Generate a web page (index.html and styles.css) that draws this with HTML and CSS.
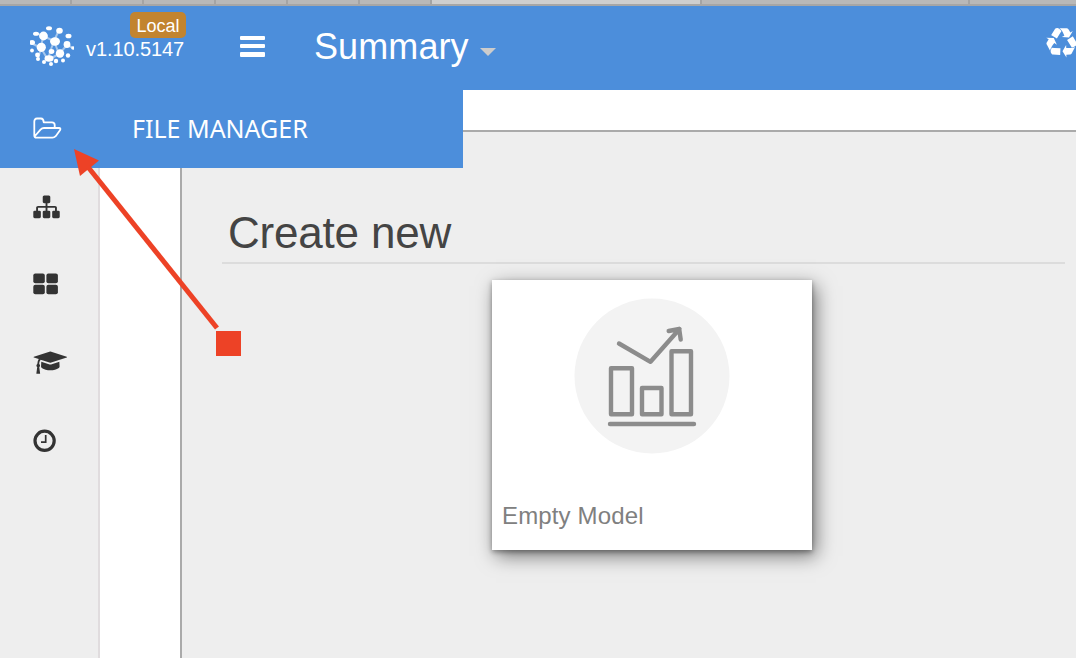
FILE: index.html
```html
<!DOCTYPE html>
<html lang="en">
<head>
<meta charset="utf-8">
<title>Summary</title>
<link rel="stylesheet" href="styles.css">
</head>
<body>
<div class="app">
  <div class="tabs"><i class="tab"></i><i class="tab"></i><i class="tab"></i><i class="tab"></i><i class="tab"></i><i class="tab"></i><i class="tab tab-active"></i><i class="tab tab-wide"></i><i class="tab tab-rest"></i></div>
  <header class="header">
    <svg class="logo" viewBox="0 0 44 42" fill="#fff">
      <g stroke="#fff" stroke-width="2" opacity=".5" fill="none"><path d="M13 11L11 23L1 18M24 16L13 11L6 8M24 16L29 5M24 16L20 27L18 35M11 23L18 35M29 29L24 16M29 29L37 20L43 23M29 29L18 35M11 23L8 34"/></g>
      <ellipse cx="19" cy="3.200" rx="3" ry="2"/><ellipse cx="29.500" cy="5.800" rx="3.300" ry="3"/><ellipse cx="6" cy="8.800" rx="3" ry="2"/><circle cx="13.500" cy="11" r="4.400"/><ellipse cx="38.500" cy="11" rx="3" ry="2.300"/><ellipse cx="25" cy="16.500" rx="5" ry="4.200"/><ellipse cx="2" cy="17.500" rx="3" ry="2.500"/><circle cx="11.300" cy="22.300" r="4.600"/><circle cx="37" cy="19.500" r="3.400"/><circle cx="43" cy="23" r="1.800"/><circle cx="2" cy="25.500" r="1.900"/><ellipse cx="21.500" cy="26.500" rx="2.800" ry="2.400"/><circle cx="30" cy="28.500" r="4.200"/><circle cx="7.500" cy="30" r="2.400"/><circle cx="38" cy="30.500" r="2.200"/><circle cx="8" cy="34" r="2"/><ellipse cx="19" cy="33.500" rx="4.500" ry="3.200"/><circle cx="26" cy="36" r="2.200"/><circle cx="33" cy="35.500" r="2"/><circle cx="14" cy="37" r="2"/><circle cx="21" cy="39" r="2"/>
    </svg>
    <div class="build"><span class="badge">Local</span><span class="version">v1.10.5147</span></div>
    <div class="burger"><i></i><i></i><i></i></div>
    <h1 class="title">Summary</h1>
    <i class="caret"></i>
    <svg class="recycle" viewBox="0 0 1792 1792" fill="#fff"><path d="M836 1169l-15 368-2 22-420-29q-36-3-67-31.500t-47-65.500q-11-27-14.500-55t4-65 12-55 21.500-64 19-53q78 12 509 28zm-387-586l180 379-147-92q-63 72-111.500 144.500t-72.500 125-39.500 94.500-18.500 63l-4 21-190-357q-17-26-18-56t6-47l8-18q35-63 114-188l-140-86zm1231 517l-188 359q-12 29-36.500 46.500t-43.500 20.500l-18 4q-71 7-219 12l8 164-230-367 211-362 7 173q170 16 283 5t170-33zm-785-924q-47 63-265 435l-317-187-19-12 225-356q20-31 60-45t80-10q24 2 48.500 12t42 21 41.500 33 36 34.500 36 39.500 32 35zm655 307l212 363q18 37 12.500 76t-27.500 74q-13 20-33 37t-38 28-48.500 22-47 16-51.500 14-46 12q-34-72-265-436l313-195zm-143-226l142-83-220 373-419-20 151-86q-34-89-75-166t-75.500-123.500-64.500-80-47-46.500l-17-13 405 1q31-3 58 10.500t39 28.500l11 15q39 61 112 190z"/></svg>
  </header>
  <div class="body">
    <nav class="rail">
      <svg class="icon" viewBox="0 0 34 26"><path transform="translate(.3 -.3) scale(.01475)" d="M1792 1248v320q0 40-28 68t-68 28h-320q-40 0-68-28t-28-68v-320q0-40 28-68t68-28h96v-192h-512v192h96q40 0 68 28t28 68v320q0 40-28 68t-68 28h-320q-40 0-68-28t-28-68v-320q0-40 28-68t68-28h96v-192h-512v192h96q40 0 68 28t28 68v320q0 40-28 68t-68 28h-320q-40 0-68-28t-28-68v-320q0-40 28-68t68-28h96v-192q0-52 38-90t90-38h512v-192h-96q-40 0-68-28t-28-68v-320q0-40 28-68t68-28h320q40 0 68 28t28 68v320q0 40-28 68t-68 28h-96v192h512q52 0 90 38t38 90v192h96q40 0 68 28t28 68z"/></svg>
      <svg class="icon" viewBox="0 0 34 26"><rect x=".3" y="1.400" width="11.500" height="9.800" rx="2"/><rect x="13.400" y="1.400" width="11.500" height="9.800" rx="2"/><rect x=".3" y="12.700" width="11.500" height="9.600" rx="2"/><rect x="13.400" y="12.700" width="11.500" height="9.600" rx="2"/></svg>
      <svg class="icon" viewBox="0 0 34 26"><path transform="translate(.6 -.3) scale(.01451)" d="M1774 836l18 316q4 69-82 128t-235 93.500-323 34.500-323-34.500-235-93.500-82-128l18-316 574 181q22 7 48 7t48-7zm530-324q0 23-22 31l-1120 352q-4 1-10 1t-10-1l-652-206q-43 34-71 111.500t-34 178.500q63 36 63 109 0 69-58 107l58 433q2 14-8 25-9 11-24 11h-192q-15 0-24-11-10-11-8-25l58-433q-58-38-58-107 0-73 65-111 11-207 98-330l-333-104q-22-8-22-31t22-31l1120-352q4-1 10-1t10 1l1120 352q22 8 22 31z"/></svg>
      <svg class="icon" viewBox="0 0 34 26"><circle cx="11.600" cy="12.800" r="9.600" fill="none" stroke="#333" stroke-width="3.200"/><path d="M12.700 7v7.100H8" fill="none" stroke="#333" stroke-width="1.700"/></svg>
    </nav>
    <div class="gutter"></div>
    <main class="content">
      <section class="panel">
        <h2 class="heading">Create new</h2>
        <article class="card">
          <svg class="chart" viewBox="0 0 156 156">
            <circle cx="78" cy="78" r="77.500" fill="#f3f3f3"/>
            <g fill="none" stroke="#8c8c8c" stroke-width="4.400" stroke-linecap="round" stroke-linejoin="round"><path d="M37 70.200h21v46H37zM68 90h19.500v26.200H68zM97.500 53.200H117v63H97.500zM36 126h84M45 45.500l31.500 18.300L105.500 31M94.700 33l10.500-2 1.500 10.500"/></g>
          </svg>
          <div class="card-label">Empty Model</div>
        </article>
      </section>
    </main>
    <div class="flyout">
      <svg class="folder" viewBox="0 0 30 24" fill="none" stroke="#fff" stroke-width="1.800" stroke-linejoin="round"><path d="M1.300 18.500V4.500Q1.300 1.500 4 1.500H8Q10.500 1.500 10.700 5.300H19Q21.700 5.300 21.700 8V11M1.300 18.500Q1.300 20.700 3.500 20.700H19.500Q21.300 20.700 22.700 19.200L27 13.300Q28.200 11 26 11H11Q9 11 7.500 12.600L2 19"/></svg>
      <span class="flyout-label">FILE MANAGER</span>
    </div>
  </div>
  <svg class="pointer" viewBox="0 0 170 210" fill="#ed4226"><path d="M0 0l25 11.500L6 27z"/><path d="M14 18l129 161" stroke="#ed4226" stroke-width="5"/><path d="M142 182h25v25h-25z"/></svg>
</div>
</body>
</html>
```
FILE: styles.css
```css
* { box-sizing: border-box; }
body { margin: 0; font-family: "Liberation Sans", Arial, sans-serif; }
.app { position: relative; width: 1076px; height: 658px; overflow: hidden; display: flex; flex-direction: column; background: #fff; }
.tabs { display: flex; flex: none; height: 6px; background: #b8b8b8; border-bottom: 2px solid #a6a6a6; }
.tab { width: 72px; border-right: 2px solid #a4a4a4; }
.tab-active { width: 270px; background: #cecece; }
.tab-wide { width: 268px; }
.tab-rest { flex: 1; border: 0; }
.header { flex: none; display: flex; align-items: flex-start; height: 84px; padding-left: 30px; background: #4c8edb; color: #fff; }
.logo { width: 44px; height: 42px; margin-top: 19px; filter: blur(.7px); }
.build { display: flex; flex-direction: column; width: 166px; padding: 6px 0 0 12px; }
.badge { width: 56px; height: 26px; margin-left: 44px; border-radius: 5px; background: #c2842f; font-size: 18px; line-height: 28px; text-align: center; }
.version { font-size: 20px; line-height: 22px; letter-spacing: -.1px; }
.burger { display: flex; flex-direction: column; gap: 4px; width: 25px; padding-top: 30px; }
.burger i { height: 4.200px; border-radius: 1px; background: #fff; }
.title { width: 154px; margin: 19px 0 0 49px; font-size: 36px; font-weight: 400; line-height: 43px; letter-spacing: .1px; }
.caret { margin: 41.500px 0 0 12px; border: 8px solid transparent; border-top-color: #ccc; border-bottom: 0; }
.recycle { flex: none; width: 31px; height: 31px; margin: 22px -1px 0 auto; }
.body { position: relative; flex: 1; display: flex; min-height: 0; }
.rail { display: flex; flex-direction: column; gap: 52px; width: 100px; padding: 104px 0 0 33px; background: #eee; border-right: 2px solid #e0dcde; }
.icon { width: 34px; height: 26px; fill: #333; }
.gutter { width: 80px; }
.content { flex: 1; display: flex; padding-top: 40px; }
.panel { flex: 1; padding: 76px 11px 0 40px; background: #eee; border-top: 2px solid #aaa; border-left: 2px solid #aaa; }
.heading { height: 56px; margin: 0; padding-left: 6px; border-bottom: 2px solid #dcdcdc; color: #444; font-size: 44px; font-weight: 400; line-height: 50px; letter-spacing: -.2px; }
.card { width: 320px; height: 270px; margin: 16px 0 0 270px; padding: 18px 10px 0; background: #fff; box-shadow: 4px 6px 18px rgba(0,0,0,.5), 0 2px 5px rgba(0,0,0,.35); }
.chart { display: block; width: 156px; height: 156px; margin: 0 auto; filter: blur(.4px); }
.card-label { margin-top: 48px; color: #808080; font-size: 24px; line-height: 28px; letter-spacing: .15px; }
.flyout { position: absolute; top: 0; left: 0; display: flex; align-items: center; width: 463px; height: 78px; padding-left: 33px; background: #4c8edb; color: #fff; }
.folder { width: 30px; height: 24px; }
.flyout-label { margin: 0 0 2px 69px; font-family: "Noto Sans", sans-serif; font-size: 25px; line-height: 34px; }
.pointer { position: absolute; left: 74px; top: 149px; width: 170px; height: 210px; }
```
